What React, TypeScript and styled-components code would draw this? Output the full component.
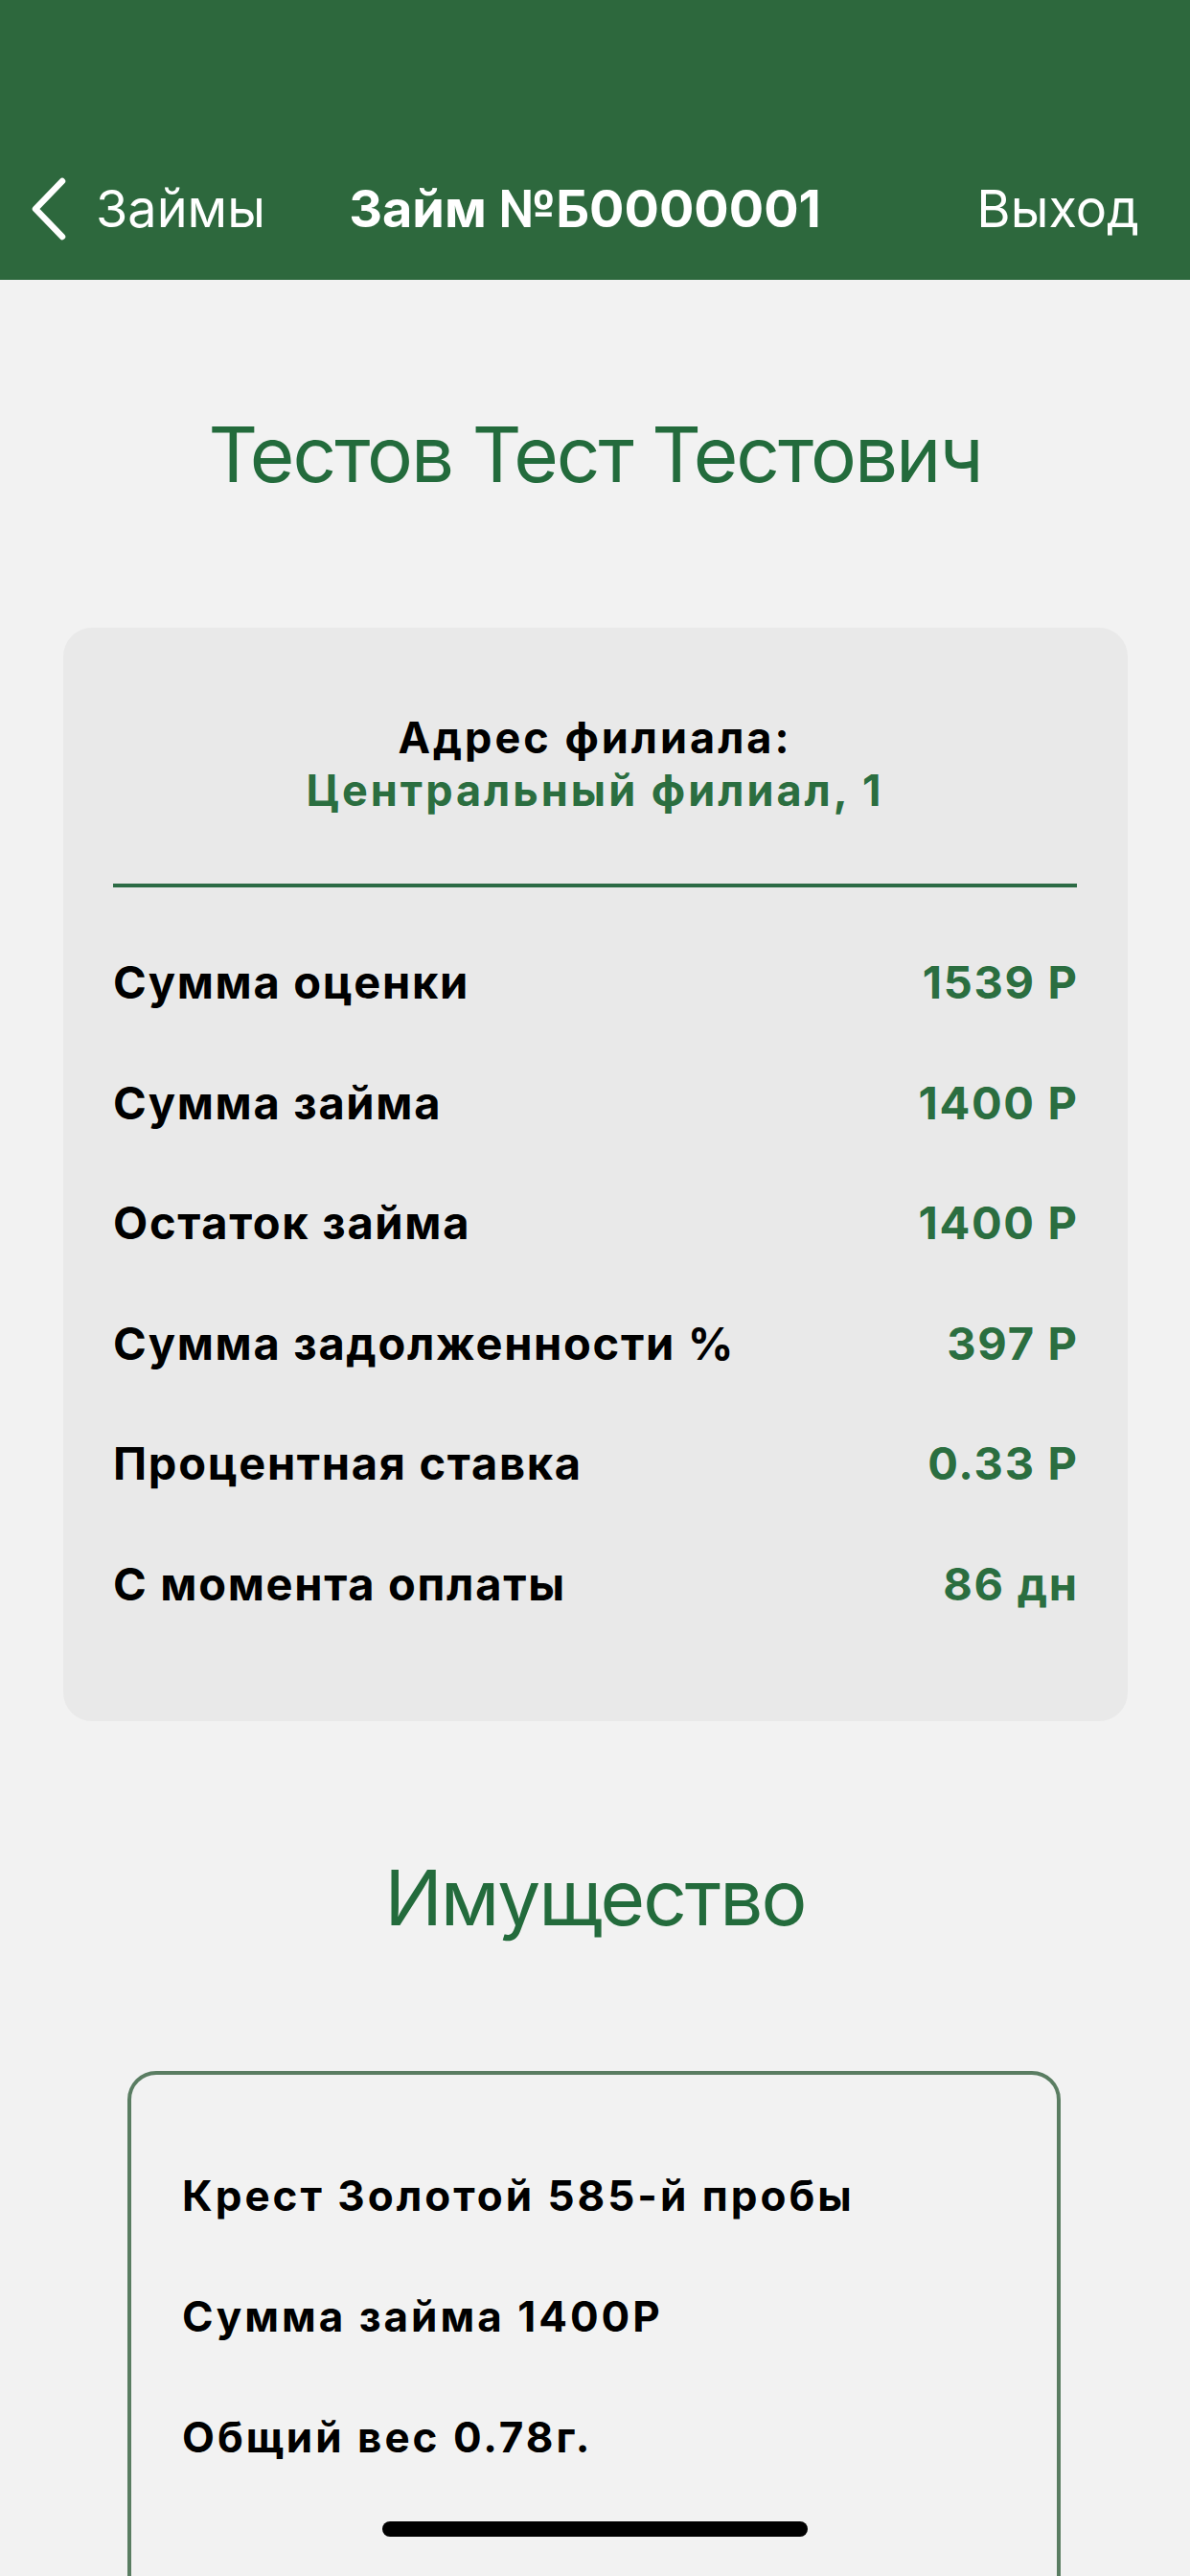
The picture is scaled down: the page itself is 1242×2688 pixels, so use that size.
import React from 'react';
import styled, { createGlobalStyle } from 'styled-components';

const GlobalStyle = createGlobalStyle`
  html, body {
    margin: 0;
    padding: 0;
    background: #f2f2f2;
  }
  body {
    font-family: Inter, 'Liberation Sans', sans-serif;
  }
`;

const Page = styled.div`
  min-height: 2688px;
  background: #f2f2f2;
  overflow: hidden;
`;

const Header = styled.header`
  height: 292px;
  box-sizing: border-box;
  padding: 144px 53px 0 32px;
  background: #2d683d;
`;

const NavRow = styled.div`
  height: 148px;
  display: grid;
  grid-template-columns: 1fr auto 1fr;
  align-items: center;
`;

const BackButton = styled.div`
  display: flex;
  align-items: center;
  gap: 30px;
  color: #ffffff;
  font-size: 54px;
  line-height: 54px;
  justify-self: start;
`;

const NavTitle = styled.div`
  color: #ffffff;
  font-size: 54px;
  line-height: 54px;
  font-weight: 700;
`;

const NavAction = styled.div`
  justify-self: end;
  color: #ffffff;
  font-size: 54px;
  line-height: 54px;
`;

const Heading = styled.h1<{ $top: number }>`
  margin: ${(p) => p.$top}px 0 0;
  text-align: center;
  color: #236b3c;
  font-size: 80px;
  line-height: 80px;
  font-weight: 400;
  letter-spacing: -2px;
`;

const InfoCard = styled.section`
  margin: 141px 65px 0 66px;
  padding: 87px 53px 81px 52px;
  background: #e9e9e9;
  border-radius: 30px;
`;

const Address = styled.div`
  text-align: center;
  font-size: 45px;
  line-height: 55px;
  font-weight: 700;
  letter-spacing: 3px;
`;

const AddressLabel = styled.div`
  color: #000000;
`;

const AddressValue = styled.div`
  color: #2b6e40;
`;

const Divider = styled.hr`
  margin: 70px 0 36px;
  border: none;
  height: 4px;
  background: #2c6b45;
`;

const Row = styled.div`
  height: 125.5px;
  display: flex;
  align-items: center;
  justify-content: space-between;
  font-size: 47px;
  line-height: 47px;
  font-weight: 700;
  letter-spacing: 1.7px;
`;

const RowLabel = styled.span`
  color: #000000;
`;

const RowValue = styled.span`
  color: #2b6e40;
  margin-right: -1.7px;
`;

const PropertyBox = styled.section`
  margin: 141px 135px 0 133px;
  padding: 104px 53px 320px;
  border: 4px solid #5a7d62;
  border-radius: 30px;
  display: flex;
  flex-direction: column;
  gap: 81px;
`;

const PropertyLine = styled.div`
  color: #000000;
  font-size: 44px;
  line-height: 45px;
  font-weight: 700;
  letter-spacing: 3px;
`;

const HomeIndicator = styled.div`
  position: fixed;
  left: 399px;
  bottom: 41px;
  width: 444px;
  height: 16px;
  border-radius: 8px;
  background: #000000;
`;

const Chevron = () => (
  <svg width="38" height="66" viewBox="0 0 38 66" fill="none">
    <polyline
      points="33,4 5,33 33,62"
      stroke="#ffffff"
      strokeWidth="6.5"
      strokeLinecap="round"
      strokeLinejoin="round"
    />
  </svg>
);

const rows = [
  { label: 'Сумма оценки', value: '1539 Р' },
  { label: 'Сумма займа', value: '1400 Р' },
  { label: 'Остаток займа', value: '1400 Р' },
  { label: 'Сумма задолженности %', value: '397 Р' },
  { label: 'Процентная ставка', value: '0.33 Р' },
  { label: 'С момента оплаты', value: '86 дн' },
];

const property = ['Крест Золотой 585-й пробы', 'Сумма займа 1400Р', 'Общий вес 0.78г.'];

export default function App() {
  return (
    <Page>
      <GlobalStyle />
      <Header>
        <NavRow>
          <BackButton>
            <Chevron />
            Займы
          </BackButton>
          <NavTitle>Займ №Б0000001</NavTitle>
          <NavAction>Выход</NavAction>
        </NavRow>
      </Header>

      <Heading $top={142}>Тестов Тест Тестович</Heading>

      <InfoCard>
        <Address>
          <AddressLabel>Адрес филиала:</AddressLabel>
          <AddressValue>Центральный филиал, 1</AddressValue>
        </Address>
        <Divider />
        {rows.map((r) => (
          <Row key={r.label}>
            <RowLabel>{r.label}</RowLabel>
            <RowValue>{r.value}</RowValue>
          </Row>
        ))}
      </InfoCard>

      <Heading $top={144}>Имущество</Heading>

      <PropertyBox>
        {property.map((p) => (
          <PropertyLine key={p}>{p}</PropertyLine>
        ))}
      </PropertyBox>

      <HomeIndicator />
    </Page>
  );
}
